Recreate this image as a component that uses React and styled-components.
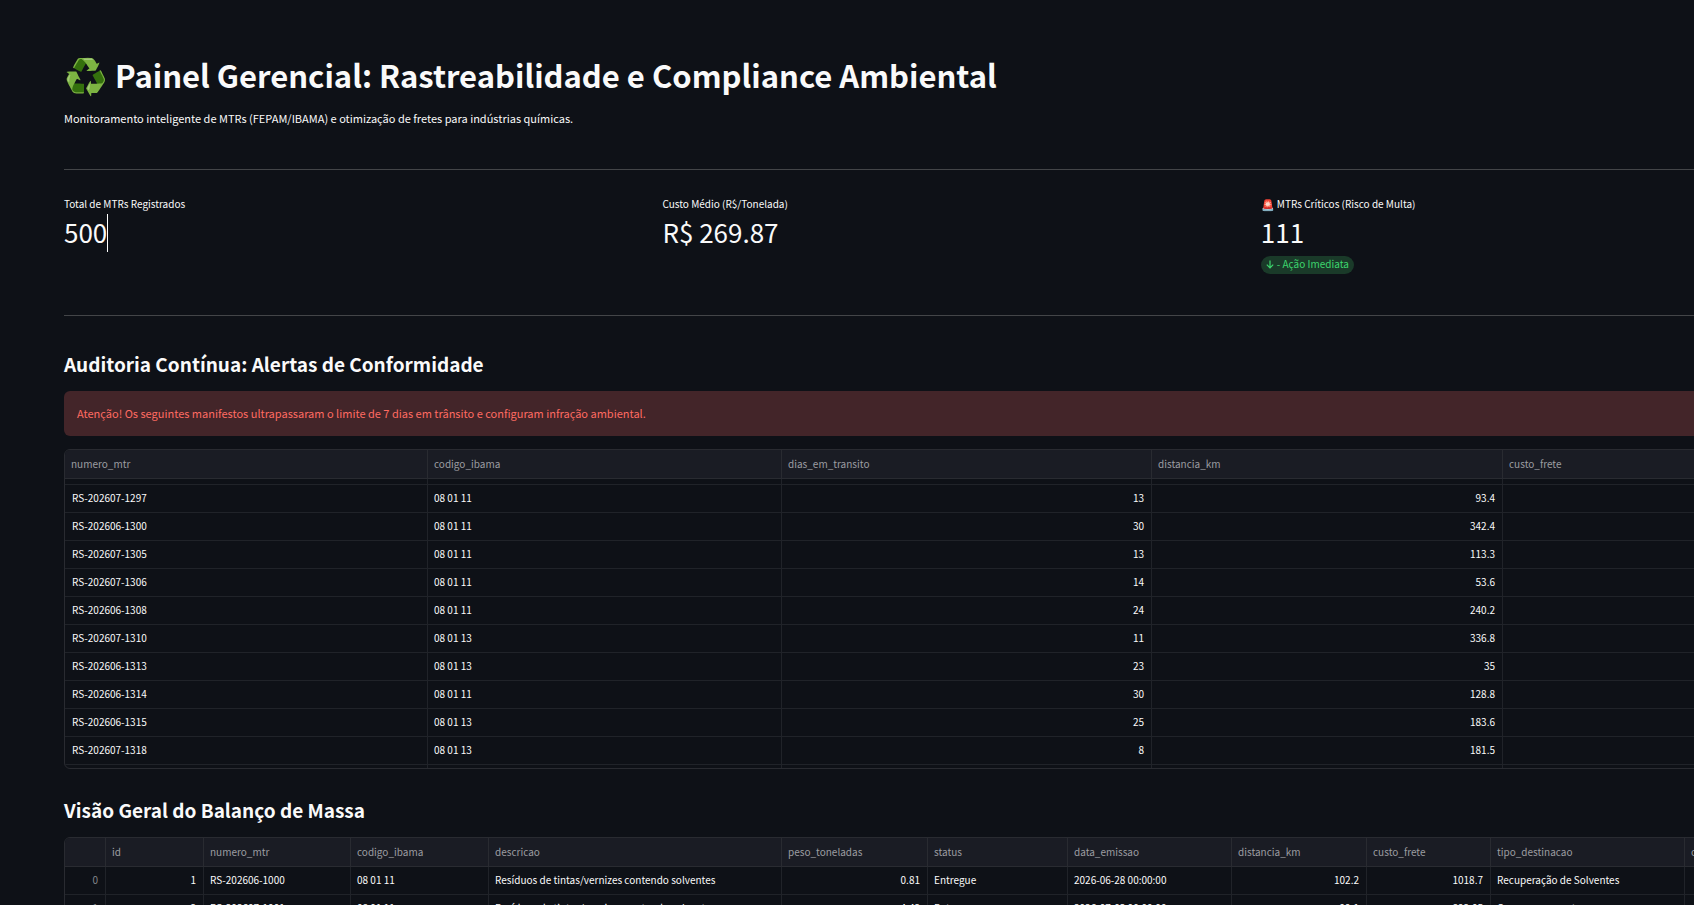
import React from 'react';
import styled, { createGlobalStyle } from 'styled-components';

const GlobalStyle = createGlobalStyle`
  * {
    box-sizing: border-box;
  }

  body {
    margin: 0;
    background: #0e1117;
    color: #fafafa;
    font-family: 'Noto Sans CJK SC', 'Noto Sans', sans-serif;
    font-size: 11px;
  }
`;

const Viewport = styled.div`
  height: 100vh;
  overflow: hidden;
`;

const Main = styled.main`
  width: 113vw;
  padding: 53px 64px 64px;
`;

const Title = styled.h1`
  display: flex;
  align-items: center;
  gap: 7px;
  margin: 0 0 11px;
  font-size: 31px;
  font-weight: 700;
  line-height: 44px;
`;

const TitleIcon = styled.span`
  padding-bottom: 3px;
  font-size: 35px;
  line-height: 41px;
`;

const Subtitle = styled.p`
  margin: 0;
  font-size: 11px;
  line-height: 20px;
`;

const Divider = styled.hr`
  height: 1px;
  margin: 41px 0 26px;
  border: 0;
  background: #434548;
`;

const Metrics = styled.section`
  display: grid;
  grid-template-columns: repeat(3, 1fr);
  gap: 9px;
`;

const MetricLabel = styled.div`
  display: flex;
  gap: 2px;
  font-size: 10px;
  line-height: 16px;
`;

const LabelIcon = styled.span`
  font-size: 11px;
`;

const MetricValue = styled.div`
  display: flex;
  height: 38px;
  margin: 2px 0 4px;
  font-size: 26px;
  line-height: 36px;
`;

const Caret = styled.span`
  width: 1px;
  height: 38px;
  background: #ffffff;
`;

const Delta = styled.div`
  display: inline-flex;
  align-items: center;
  gap: 3px;
  height: 18px;
  padding: 0 5px 2px;
  border-radius: 9px;
  background: #1a3a29;
  color: #3dd56d;
  font-size: 10px;
  line-height: 16px;
`;

const Section = styled.section`
  margin-bottom: 19px;
`;

const SectionTitle = styled.h2`
  margin: 0;
  padding: 8px 0 13px;
  font-size: 19px;
  font-weight: 700;
  line-height: 28px;
`;

const Alert = styled.div`
  margin-bottom: 13px;
  padding: 12px 13px 13px;
  border-radius: 6px;
  background: #432529;
  color: #ff6b62;
  font-size: 11px;
  line-height: 20px;
`;

const TableFrame = styled.div`
  overflow: hidden;
  border: 1px solid #292b31;
  border-radius: 6px;
`;

const Table = styled.table`
  width: 100%;
  table-layout: fixed;
  border-collapse: separate;
  border-spacing: 0;
  font-size: 10px;
  line-height: 18px;
`;

const Th = styled.th`
  width: ${({ $width }) => ($width ? `${$width}px` : 'auto')};
  height: 29px;
  padding: 0 6px;
  border-right: 1px solid #292b31;
  border-bottom: 1px solid #292b31;
  background: #1a1c24;
  color: #9c9da1;
  font-weight: 400;
  text-align: left;
  white-space: nowrap;
`;

const Td = styled.td`
  height: 28px;
  padding: 0 7px 2px 6px;
  border-right: 1px solid #202329;
  border-bottom: 1px solid #202329;
  color: ${({ $muted }) => ($muted ? '#84868a' : '#fafafa')};
  text-align: ${({ $number }) => ($number ? 'right' : 'left')};
  white-space: nowrap;

  &:first-child {
    padding-left: 7px;
  }
`;

// rows scrolled partly out of view
const EdgeTd = styled.td`
  height: ${({ $height }) => $height}px;
  padding: 0;
  border-right: 1px solid #202329;
  border-bottom: ${({ $last }) => ($last ? 0 : '1px solid #202329')};
`;

const alertColumns = [
  { name: 'numero_mtr', width: 363 },
  { name: 'codigo_ibama', width: 354 },
  { name: 'dias_em_transito', width: 370, number: true },
  { name: 'distancia_km', width: 351, number: true },
  { name: 'custo_frete', number: true },
];

const alertRows = [
  ['RS-202607-1297', '08 01 11', '13', '93.4', ''],
  ['RS-202606-1300', '08 01 11', '30', '342.4', ''],
  ['RS-202607-1305', '08 01 11', '13', '113.3', ''],
  ['RS-202607-1306', '08 01 11', '14', '53.6', ''],
  ['RS-202606-1308', '08 01 11', '24', '240.2', ''],
  ['RS-202607-1310', '08 01 13', '11', '336.8', ''],
  ['RS-202606-1313', '08 01 13', '23', '35', ''],
  ['RS-202606-1314', '08 01 11', '30', '128.8', ''],
  ['RS-202606-1315', '08 01 13', '25', '183.6', ''],
  ['RS-202607-1318', '08 01 13', '8', '181.5', ''],
];

const massColumns = [
  { name: '', width: 41, number: true, muted: true },
  { name: 'id', width: 98, number: true },
  { name: 'numero_mtr', width: 147 },
  { name: 'codigo_ibama', width: 138 },
  { name: 'descricao', width: 293 },
  { name: 'peso_toneladas', width: 146, number: true },
  { name: 'status', width: 140 },
  { name: 'data_emissao', width: 164 },
  { name: 'distancia_km', width: 135, number: true },
  { name: 'custo_frete', width: 124, number: true },
  { name: 'tipo_destinacao', width: 194 },
  { name: 'custo_tonelada', number: true },
];

const massRows = [
  ['0', '1', 'RS-202606-1000', '08 01 11', 'Resíduos de tintas/vernizes contendo solventes', '0.81', 'Entregue', '2026-06-28 00:00:00', '102.2', '1018.7', 'Recuperação de Solventes', ''],
  ['1', '2', 'RS-202607-1001', '08 01 11', 'Resíduos de tintas/vernizes contendo solventes', '4.42', 'Entregue', '2026-07-03 00:00:00', '99.1', '892.05', 'Coprocessamento', ''],
];

const EdgeRow = ({ columns, height, last }) => (
  <tr>
    {columns.map((col) => (
      <EdgeTd key={col.name} $height={height} $last={last} />
    ))}
  </tr>
);

const DataTable = ({ columns, rows, scrolled }) => (
  <TableFrame>
    <Table>
      <thead>
        <tr>
          {columns.map((col) => (
            <Th key={col.name} scope="col" $width={col.width}>{col.name}</Th>
          ))}
        </tr>
      </thead>
      <tbody>
        {scrolled && <EdgeRow columns={columns} height={6} />}
        {rows.map((row) => (
          <tr key={row[0]}>
            {row.map((value, i) => (
              <Td key={columns[i].name} $number={columns[i].number} $muted={columns[i].muted}>
                {value}
              </Td>
            ))}
          </tr>
        ))}
        {scrolled && <EdgeRow columns={columns} height={3} last />}
      </tbody>
    </Table>
  </TableFrame>
);

const ArrowDown = () => (
  <svg width="8" height="10" viewBox="0 0 8 10" fill="none" stroke="currentColor" strokeWidth="1.2" aria-hidden="true">
    <path d="M4 1.6v7.2M0.8 5.6L4 8.8l3.2-3.2" />
  </svg>
);

const App = () => (
  <>
    <GlobalStyle />
    <Viewport>
      <Main>
        <Title>
          <TitleIcon>♻️</TitleIcon>
          Painel Gerencial: Rastreabilidade e Compliance Ambiental
        </Title>
        <Subtitle>
          Monitoramento inteligente de MTRs (FEPAM/IBAMA) e otimização de fretes para indústrias químicas.
        </Subtitle>

        <Divider />

        <Metrics>
          <div>
            <MetricLabel>Total de MTRs Registrados</MetricLabel>
            <MetricValue>500<Caret /></MetricValue>
          </div>
          <div>
            <MetricLabel>Custo Médio (R$/Tonelada)</MetricLabel>
            <MetricValue>R$ 269.87</MetricValue>
          </div>
          <div>
            <MetricLabel>
              <LabelIcon>🚨</LabelIcon>
              MTRs Críticos (Risco de Multa)
            </MetricLabel>
            <MetricValue>111</MetricValue>
            <Delta>
              <ArrowDown />
              - Ação Imediata
            </Delta>
          </div>
        </Metrics>

        <Divider />

        <Section>
          <SectionTitle>Auditoria Contínua: Alertas de Conformidade</SectionTitle>
          <Alert role="alert">
            Atenção! Os seguintes manifestos ultrapassaram o limite de 7 dias em trânsito e configuram infração ambiental.
          </Alert>
          <DataTable columns={alertColumns} rows={alertRows} scrolled />
        </Section>

        <Section>
          <SectionTitle>Visão Geral do Balanço de Massa</SectionTitle>
          <DataTable columns={massColumns} rows={massRows} />
        </Section>
      </Main>
    </Viewport>
  </>
);

export default App;
